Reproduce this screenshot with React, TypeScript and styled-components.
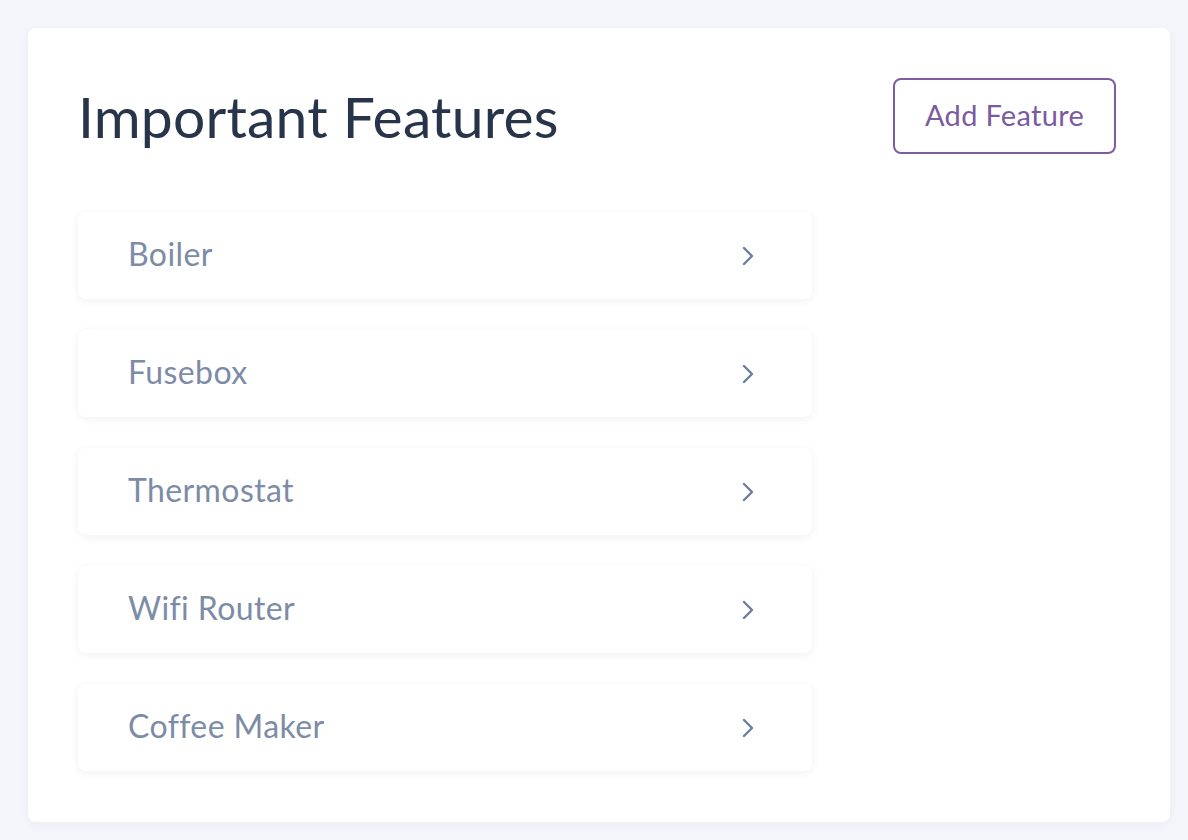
import React from "react";
import styled, { createGlobalStyle } from "styled-components";

const Global = createGlobalStyle`
  html, body { margin: 0; padding: 0; background: #f4f5fa; }
  body { font-family: Lato, "Open Sans", sans-serif; }
`;

const Page = styled.div`
  padding: 28px 18px 18px 28px;
  box-sizing: border-box;
  min-height: 840px;
`;

const Card = styled.section`
  background: #ffffff;
  border-radius: 8px;
  box-shadow: 0 2px 10px rgba(40, 50, 90, 0.04);
  padding: 50px 54px 50px 50px;
  box-sizing: border-box;
  width: 1142px;
  height: 794px;
`;

const Header = styled.header`
  display: flex;
  justify-content: space-between;
  align-items: flex-start;
`;

const Title = styled.h1`
  margin: 0;
  font-weight: 400;
  font-size: 57px;
  line-height: 76px;
  color: #28344a;
  letter-spacing: 0.2px;
`;

const Button = styled.button`
  width: 223px;
  height: 76px;
  padding: 0 0 4px;
  border: 2px solid #7d5ca3;
  border-radius: 8px;
  background: #fff;
  color: #7b5a9f;
  font-family: inherit;
  font-size: 29px;
  letter-spacing: 0.3px;
  cursor: pointer;
`;

const List = styled.div`
  margin-top: 58px;
  display: flex;
  flex-direction: column;
  gap: 31px;
  width: 734px;
`;

const Row = styled.div`
  height: 87px;
  display: flex;
  align-items: center;
  justify-content: space-between;
  padding: 0 57px 4px 50px;
  background: #fff;
  border-radius: 8px;
  box-shadow: 0 2px 8px rgba(40, 50, 90, 0.07);
  box-sizing: border-box;
  color: #7c8ca6;
  font-size: 32px;
  letter-spacing: 0.4px;
`;

const ChevronSvg = styled.svg`
  margin-top: 4px;
  flex: none;
`;

const Chevron = () => (
  <ChevronSvg width="14" height="20" viewBox="0 0 14 20" fill="none">
    <path d="M3 2 L11 10 L3 18" stroke="#6b7e9d" strokeWidth="2.4" strokeLinecap="round" strokeLinejoin="round" />
  </ChevronSvg>
);

const items = ["Boiler", "Fusebox", "Thermostat", "Wifi Router", "Coffee Maker"];

export default function App() {
  return (
    <>
      <Global />
      <Page>
        <Card>
          <Header>
            <Title>Important Features</Title>
            <Button>Add Feature</Button>
          </Header>
          <List>
            {items.map((it) => (
              <Row key={it}>
                <span>{it}</span>
                <Chevron />
              </Row>
            ))}
          </List>
        </Card>
      </Page>
    </>
  );
}
